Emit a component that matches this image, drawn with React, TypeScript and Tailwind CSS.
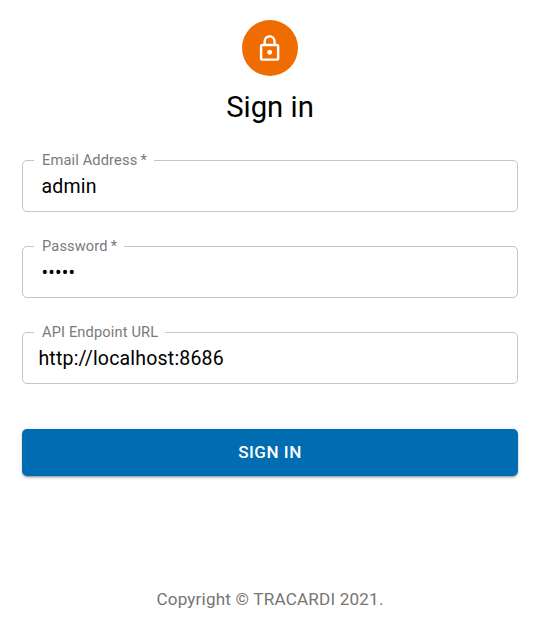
import React from "react";

type FieldProps = { label: string; required?: boolean; value: string; type?: string; legend: string; inset: string };

function Field({ label, required, value, type = "text", legend, inset }: FieldProps) {
  return (
    <div className="relative h-[52px] w-full">
      <input
        type={type}
        defaultValue={value}
        aria-label={label}
        className={`h-full w-full rounded-[5px] border border-[#c4c4c4] bg-white pr-4 text-[19.52px] tracking-[0.19px] text-black outline-none ${inset}`}
      />
      <span className={`absolute left-3 -top-2 h-4 bg-white pl-2 text-[14.64px] leading-4 tracking-[0.137px] whitespace-nowrap text-[#7a7a7a] ${legend}`}>
        {label}
        {required && "\u2009*"}
      </span>
    </div>
  );
}

export default function App() {
  return (
    <main className="flex h-[623px] w-[540px] flex-col items-center bg-white px-[22px] pt-5 font-['Roboto',sans-serif] text-black">
      <div className="flex size-14 shrink-0 items-center justify-center rounded-full bg-[#ef6c00]">
        <svg viewBox="0 0 24 24" className="mt-px size-[29.25px] fill-white">
          <path d="M12 17c1.1 0 2-.9 2-2s-.9-2-2-2-2 .9-2 2 .9 2 2 2zm6-9h-1V6c0-2.76-2.24-5-5-5S7 3.24 7 6v2H6c-1.1 0-2 .9-2 2v10c0 1.1.9 2 2 2h12c1.1 0 2-.9 2-2V10c0-1.1-.9-2-2-2zM8.900 6c0-1.710 1.390-3.100 3.100-3.100s3.100 1.390 3.100 3.100v2H8.900V6zM18 20H6V10h12v10z" />
        </svg>
      </div>
      <h1 className="mt-3 text-[29.28px] leading-[38px]">Sign in</h1>
      <form className="mt-[34px] flex w-full flex-col gap-[34px]">
        <Field label="Email Address" required value="admin" legend="w-[120px]" inset="pl-[18.5px]" />
        <Field label="Password" required value="admin" type="password" legend="w-[90px]" inset="pl-[18.5px]" />
        <Field label="API Endpoint URL" value="http://localhost:8686" legend="w-[131px]" inset="pl-[15.4px]" />
        <button type="button" className="mt-[11px] h-[47px] w-full rounded-[5px] bg-[#006db3] text-[17.08px] font-medium tracking-[0.488px] text-white shadow-[0_3px_1px_-2px_rgba(0,0,0,.2),0_2px_2px_rgba(0,0,0,.14),0_1px_5px_rgba(0,0,0,.12)]">
          SIGN IN
        </button>
      </form>
      <p className="mt-[111px] text-[17.08px] leading-6 tracking-[0.2px] text-[#757575]">Copyright © TRACARDI 2021.</p>
    </main>
  );
}
